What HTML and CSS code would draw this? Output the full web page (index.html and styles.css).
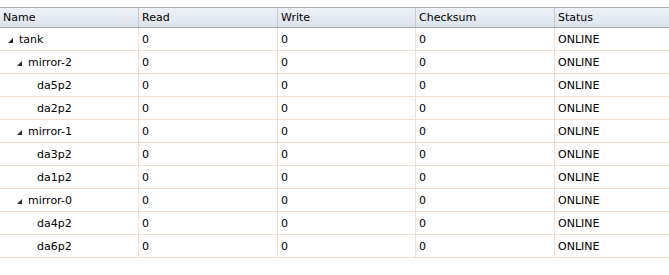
FILE: index.html
```html
<!DOCTYPE html>
<html>
<head>
<meta charset="utf-8">
<link rel="stylesheet" href="styles.css">
</head>
<body>
<div class="grid">
  <div class="row head">
    <div class="cell">Name</div>
    <div class="cell">Read</div>
    <div class="cell">Write</div>
    <div class="cell">Checksum</div>
    <div class="cell">Status</div>
  </div>
  <div class="row">
    <div class="cell name l0"><span class="tri"></span>tank</div>
    <div class="cell">0</div><div class="cell">0</div><div class="cell">0</div><div class="cell">ONLINE</div>
  </div>
  <div class="row">
    <div class="cell name l1"><span class="tri"></span>mirror-2</div>
    <div class="cell">0</div><div class="cell">0</div><div class="cell">0</div><div class="cell">ONLINE</div>
  </div>
  <div class="row">
    <div class="cell name l2">da5p2</div>
    <div class="cell">0</div><div class="cell">0</div><div class="cell">0</div><div class="cell">ONLINE</div>
  </div>
  <div class="row">
    <div class="cell name l2">da2p2</div>
    <div class="cell">0</div><div class="cell">0</div><div class="cell">0</div><div class="cell">ONLINE</div>
  </div>
  <div class="row">
    <div class="cell name l1"><span class="tri"></span>mirror-1</div>
    <div class="cell">0</div><div class="cell">0</div><div class="cell">0</div><div class="cell">ONLINE</div>
  </div>
  <div class="row">
    <div class="cell name l2">da3p2</div>
    <div class="cell">0</div><div class="cell">0</div><div class="cell">0</div><div class="cell">ONLINE</div>
  </div>
  <div class="row">
    <div class="cell name l2">da1p2</div>
    <div class="cell">0</div><div class="cell">0</div><div class="cell">0</div><div class="cell">ONLINE</div>
  </div>
  <div class="row">
    <div class="cell name l1"><span class="tri"></span>mirror-0</div>
    <div class="cell">0</div><div class="cell">0</div><div class="cell">0</div><div class="cell">ONLINE</div>
  </div>
  <div class="row">
    <div class="cell name l2">da4p2</div>
    <div class="cell">0</div><div class="cell">0</div><div class="cell">0</div><div class="cell">ONLINE</div>
  </div>
  <div class="row">
    <div class="cell name l2">da6p2</div>
    <div class="cell">0</div><div class="cell">0</div><div class="cell">0</div><div class="cell">ONLINE</div>
  </div>
</div>
</body>
</html>
```
FILE: styles.css
```css
html, body {
  margin: 0;
  padding: 0;
  background: #ffffff;
}
body {
  font-family: "DejaVu Sans", Verdana, sans-serif;
  font-size: 11px;
  color: #000;
  padding-top: 7px;
}
.grid {
  width: 669px;
}
.row {
  display: grid;
  grid-template-columns: 139px 139px 138px 139px 1fr;
  height: 23px;
  border-bottom: 1px solid #f0e1d3;
  box-sizing: border-box;
}
.cell {
  border-right: 1px solid #f0e1d3;
  padding-left: 3px;
  display: flex;
  align-items: center;
  white-space: nowrap;
  overflow: hidden;
}
.cell:last-child {
  border-right: none;
}
.head {
  height: 21px;
  border-top: 1px solid #a9a9a9;
  border-bottom: 1px solid #a9a9a9;
  background: linear-gradient(#eef2f6, #dbe3ec);
  box-sizing: content-box;
  height: 19px;
}
.head .cell {
  border-right: 1px solid #c3ccd6;
  padding-left: 3px;
}
.head .cell:last-child {
  border-right: none;
}
.name.l0 { padding-left: 8px; }
.name.l1 { padding-left: 17px; }
.name.l2 { padding-left: 37px; }
.tri {
  display: inline-block;
  width: 0;
  height: 0;
  border-left: 5px solid transparent;
  border-bottom: 5px solid #2b2b2b;
  margin-right: 6px;
  margin-top: 2px;
}
```
